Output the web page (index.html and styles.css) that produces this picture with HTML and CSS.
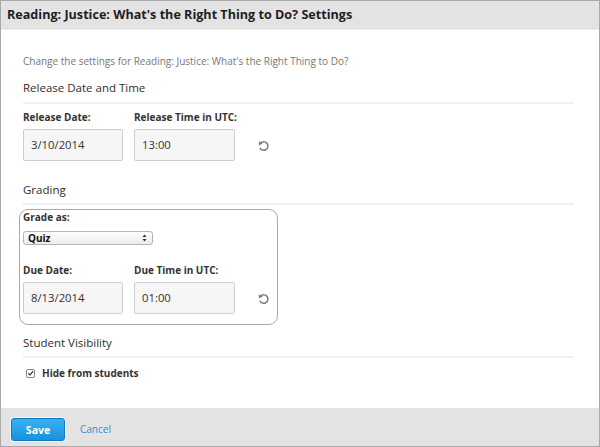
FILE: index.html
```html
<!DOCTYPE html>
<html>
<head>
<meta charset="utf-8">
<link rel="stylesheet" href="styles.css">
</head>
<body>
<div class="dialog">
  <div class="header">Reading: Justice: What's the Right Thing to Do? Settings</div>
  <div class="content">
    <p class="desc">Change the settings for Reading: Justice: What's the Right Thing to Do?</p>

    <h3 class="section">Release Date and Time</h3>
    <div class="row">
      <div class="field">
        <label class="lbl">Release Date:</label>
        <div class="input">3/10/2014</div>
      </div>
      <div class="field">
        <label class="lbl">Release Time in UTC:</label>
        <div class="input">13:00</div>
      </div>
      <span class="reset">
        <svg width="12" height="12" viewBox="0 0 12 12"><path d="M2.4 3.4 A4.2 4.2 0 1 1 1.9 7.8" fill="none" stroke="#808080" stroke-width="1.6"/><path d="M0.8 1.2 L4.8 3.6 L1.0 5.4 Z" fill="#808080"/></svg>
      </span>
    </div>

    <h3 class="section grading-h">Grading</h3>
    <div class="gradebox">
      <label class="lbl">Grade as:</label>
      <div class="select"><span>Quiz</span><svg class="arrows" width="5" height="8" viewBox="0 0 5 8"><path d="M0.5 3 L2.5 0.6 L4.5 3 Z M0.5 5 L2.5 7.4 L4.5 5 Z" fill="#333"/></svg></div>
      <div class="row row2">
        <div class="field">
          <label class="lbl">Due Date:</label>
          <div class="input">8/13/2014</div>
        </div>
        <div class="field">
          <label class="lbl">Due Time in UTC:</label>
          <div class="input">01:00</div>
        </div>
        <span class="reset">
          <svg width="12" height="12" viewBox="0 0 12 12"><path d="M2.4 3.4 A4.2 4.2 0 1 1 1.9 7.8" fill="none" stroke="#808080" stroke-width="1.6"/><path d="M0.8 1.2 L4.8 3.6 L1.0 5.4 Z" fill="#808080"/></svg>
        </span>
      </div>
    </div>

    <h3 class="section vis-h">Student Visibility</h3>
    <div class="check">
      <span class="box"><svg width="9" height="9" viewBox="0 0 9 9"><path d="M1.8 4.2 L3.8 6.2 L7.8 1.6" fill="none" stroke="#333" stroke-width="1.5"/></svg></span>
      <span class="checklbl">Hide from students</span>
    </div>
  </div>
  <div class="footer">
    <button class="save">Save</button>
    <a class="cancel">Cancel</a>
  </div>
</div>
</body>
</html>
```
FILE: styles.css
```css
html, body {
  margin: 0;
  padding: 0;
  background: #fff;
}
body {
  font-family: "Open Sans", "Liberation Sans", sans-serif;
  color: #333;
}
.dialog {
  width: 600px;
  height: 447px;
  box-sizing: border-box;
  border: 1px solid #a9a9a9;
  display: flex;
  flex-direction: column;
}
.header {
  height: 28px;
  background: #e3e3e3;
  border-bottom: 1px solid #ececec;
  font-weight: 700;
  font-size: 12.6px;
  line-height: 28px;
  padding-left: 6px;
  color: #1e1e1e;
}
.content {
  flex: 1;
  padding: 0 25px 0 22px;
}
.desc {
  margin: 24px 0 0;
  font-size: 10px;
  line-height: 14px;
  color: #777;
}
.section {
  margin: 12px 0 0;
  font-size: 11.5px;
  font-weight: 400;
  line-height: 16px;
  color: #2e2e2e;
  padding-bottom: 6px;
  border-bottom: 2px solid #f0f0f0;
}
.row {
  display: flex;
  align-items: flex-end;
  gap: 11px;
  margin-top: 6px;
}
.field {
  display: flex;
  flex-direction: column;
  width: 100px;
}
.field + .field {
  width: 101px;
}
.lbl {
  display: block;
  font-size: 10px;
  font-weight: 700;
  line-height: 14px;
  color: #333;
  margin-bottom: 5px;
  white-space: nowrap;
}
.input {
  height: 32px;
  box-sizing: border-box;
  border: 1px solid #cfcfcf;
  border-radius: 2px;
  background: #f6f6f6;
  font-size: 11.3px;
  line-height: 30px;
  padding-left: 7px;
  color: #333;
}
.reset {
  margin-left: 12px;
  height: 31px;
  display: flex;
  align-items: center;
}
.grading-h {
  margin-top: 21px;
  padding-bottom: 5px;
}
.gradebox {
  margin: 4px 0 0 -4px;
  width: 259px;
  height: 116px;
  box-sizing: border-box;
  border: 1px solid #aaa;
  border-radius: 9px;
  padding: 0 0 0 3px;
}
.gradebox .lbl {
  margin-bottom: 7px;
}
.select {
  width: 130px;
  height: 14px;
  box-sizing: border-box;
  border: 1px solid #b5b5b5;
  border-radius: 3px;
  background: linear-gradient(#fdfdfd, #ececec);
  font-size: 10px;
  font-weight: 700;
  line-height: 12px;
  padding: 0 5px 0 4px;
  display: flex;
  justify-content: space-between;
  align-items: center;
  color: #111;
}
.row2 {
  margin-top: 18px;
}
.row2 .lbl {
  margin-bottom: 5px;
}
.vis-h {
  margin-top: 10px;
  padding-bottom: 5px;
}
.check {
  display: flex;
  align-items: center;
  margin-top: 8px;
  padding-left: 3px;
  line-height: 14px;
}
.box {
  width: 9px;
  height: 9px;
  border: 1px solid #888;
  border-radius: 2px;
  display: flex;
  box-sizing: border-box;
  margin-right: 7px;
  align-items: center;
  justify-content: center;
}
.checklbl {
  font-size: 10px;
  font-weight: 700;
  color: #333;
}
.footer {
  height: 38px;
  background: #e3e3e3;
  display: flex;
  align-items: flex-start;
  padding: 10px 0 0 10px;
  box-sizing: border-box;
  gap: 15px;
}
.save {
  width: 54px;
  height: 23px;
  border: 1px solid #0f7cc4;
  border-radius: 3px;
  background: linear-gradient(#38b0f2, #1a92dc);
  color: #fff;
  font-family: "Open Sans", "Liberation Sans", sans-serif;
  font-weight: 700;
  font-size: 10.5px;
  padding: 0;
  box-shadow: 0 0 0 1px #f4f4f4;
}
.cancel {
  color: #2d8fd6;
  font-size: 10px;
  line-height: 23px;
}
```
